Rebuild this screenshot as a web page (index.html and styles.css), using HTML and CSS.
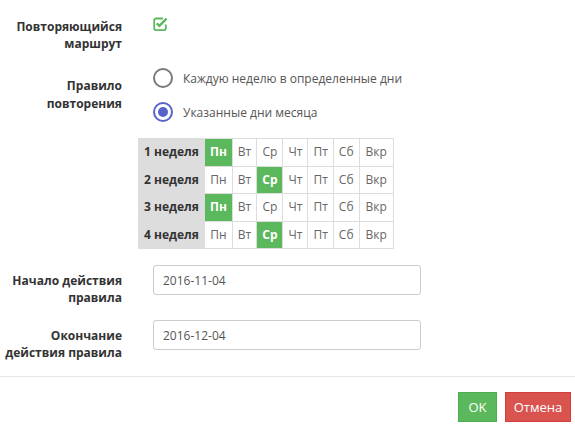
FILE: index.html
```html
<!DOCTYPE html>
<html lang="ru">
<head>
<meta charset="utf-8">
<link rel="stylesheet" href="styles.css">
</head>
<body>
<div class="form">
  <div class="row row-repeat">
    <div class="label">Повторяющийся<br>маршрут</div>
    <div class="control">
      <svg class="check" width="15" height="14" viewBox="0 0 15 14">
        <path d="M10 1.5H3A1.8 1.8 0 0 0 1.2 3.3v8A1.8 1.8 0 0 0 3 13.1h8a1.8 1.8 0 0 0 1.8-1.8V7.5" fill="none" stroke="#5cb85c" stroke-width="1.8"/>
        <path d="M3.8 6.3l2.6 2.6L13.6 1.7" fill="none" stroke="#5cb85c" stroke-width="2.4"/>
      </svg>
    </div>
  </div>
  <div class="row row-rule">
    <div class="label">Правило<br>повторения</div>
    <div class="control radios">
      <div class="radio"><span class="dot"></span><span>Каждую неделю в определенные дни</span></div>
      <div class="radio checked"><span class="dot"></span><span>Указанные дни месяца</span></div>
    </div>
  </div>
  <table class="weeks">
    <tr><th>1 неделя</th><td class="on">Пн</td><td>Вт</td><td>Ср</td><td>Чт</td><td>Пт</td><td>Сб</td><td class="last">Вкр</td></tr>
    <tr><th>2 неделя</th><td>Пн</td><td>Вт</td><td class="on">Ср</td><td>Чт</td><td>Пт</td><td>Сб</td><td class="last">Вкр</td></tr>
    <tr><th>3 неделя</th><td class="on">Пн</td><td>Вт</td><td>Ср</td><td>Чт</td><td>Пт</td><td>Сб</td><td class="last">Вкр</td></tr>
    <tr><th>4 неделя</th><td>Пн</td><td>Вт</td><td class="on">Ср</td><td>Чт</td><td>Пт</td><td>Сб</td><td class="last">Вкр</td></tr>
  </table>
  <div class="row row-start">
    <div class="label">Начало действия<br>правила</div>
    <div class="control"><input class="input" type="text" value="2016-11-04"></div>
  </div>
  <div class="row row-end">
    <div class="label">Окончание<br>действия правила</div>
    <div class="control"><input class="input" type="text" value="2016-12-04"></div>
  </div>
</div>
<div class="footer">
  <button class="btn btn-ok">OK</button>
  <button class="btn btn-cancel">Отмена</button>
</div>
</body>
</html>
```
FILE: styles.css
```css
html, body {
  margin: 0;
  padding: 0;
  background: #fff;
  font-family: "Open Sans", "Liberation Sans", sans-serif;
  font-size: 12px;
  color: #555;
}
.form {
  padding-top: 18px;
}
.row {
  display: flex;
  align-items: flex-start;
}
.label {
  width: 122px;
  flex: none;
  text-align: right;
  font-weight: bold;
  color: #333;
  line-height: 17px;
}
.control {
  margin-left: 31px;
}
.check {
  display: block;
  margin-top: -1px;
}
.row-rule {
  margin-top: 16px;
}
.row-rule .label {
  margin-top: 9px;
  line-height: 18px;
}
.radios {
  display: flex;
  flex-direction: column;
  gap: 14px;
}
.radio {
  display: flex;
  align-items: center;
  gap: 10px;
  height: 20px;
  color: #555;
}
.dot {
  width: 16px;
  height: 16px;
  border: 2px solid #7a7a7a;
  border-radius: 50%;
  box-sizing: content-box;
  position: relative;
}
.radio.checked .dot {
  border-color: #5564c8;
}
.radio.checked .dot::after {
  content: "";
  position: absolute;
  left: 3px;
  top: 3px;
  width: 10px;
  height: 10px;
  border-radius: 50%;
  background: #5564c8;
}
.weeks {
  margin: 16px 0 0 138px;
  border-collapse: collapse;
}
.weeks th, .weeks td {
  border: 1px solid #ddd;
  height: 26.5px;
  padding: 0 5px;
  font-size: 12px;
  line-height: 16px;
  text-align: center;
}
.weeks th {
  background: #ddd;
  color: #333;
  font-weight: bold;
  padding: 0 5px 0 5px;
}
.weeks td {
  color: #666;
}
.weeks td.last {
  padding: 0 6px;
}
.weeks td.on {
  background: #5cb85c;
  color: #fff;
  font-weight: bold;
  border-color: #ddd;
}
.row-start {
  margin-top: 16px;
}
.row-start .label, .row-end .label {
  margin-top: 7px;
}
.row-end {
  margin-top: 14px;
}
.input {
  display: block;
  width: 268px;
  height: 30px;
  box-sizing: border-box;
  border: 1px solid #ccc;
  border-radius: 3px;
  padding: 0 9px;
  font-family: "Open Sans", "Liberation Sans", sans-serif;
  font-size: 12px;
  color: #555;
  outline: none;
}
.footer {
  margin-top: 15px;
  border-top: 1px solid #e5e5e5;
  padding: 15px 4px 0 0;
  display: flex;
  justify-content: flex-end;
  gap: 8px;
}
.btn {
  height: 30px;
  border: 1px solid;
  border-radius: 0;
  font-family: "Open Sans", "Liberation Sans", sans-serif;
  font-size: 13px;
  color: #fff;
  padding: 0;
  margin: 0;
}
.btn-ok {
  background: #5cb85c;
  border-color: #4cae4c;
  width: 39px;
}
.btn-cancel {
  background: #d9534f;
  border-color: #d43f3a;
  width: 66px;
}
```
